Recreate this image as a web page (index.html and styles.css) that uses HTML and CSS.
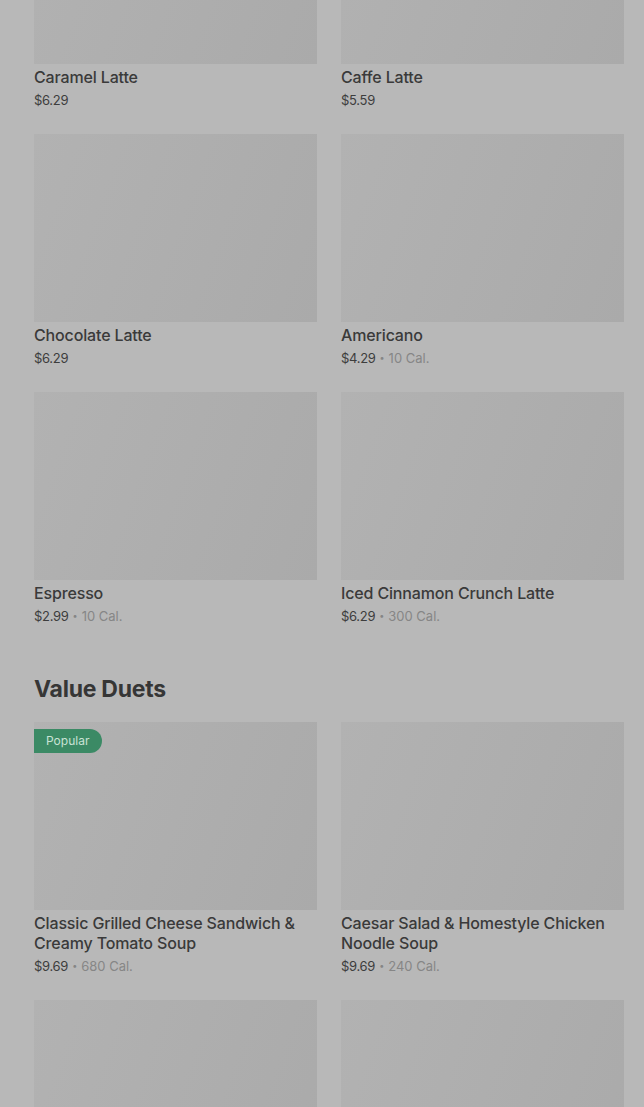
FILE: index.html
```html
<!DOCTYPE html>
<html lang="en">
<head>
<meta charset="utf-8">
<title>Menu</title>
<link rel="stylesheet" href="styles.css">
</head>
<body>
<main class="page">
  <section class="section">
    <div class="grid">
      <div class="card">
        <div class="thumb"></div>
        <div class="title">Caramel Latte</div>
        <div class="meta"><span class="price">$6.29</span></div>
      </div>
      <div class="card">
        <div class="thumb"></div>
        <div class="title">Caffe Latte</div>
        <div class="meta"><span class="price">$5.59</span></div>
      </div>
      <div class="card">
        <div class="thumb"></div>
        <div class="title">Chocolate Latte</div>
        <div class="meta"><span class="price">$6.29</span></div>
      </div>
      <div class="card">
        <div class="thumb"></div>
        <div class="title">Americano</div>
        <div class="meta"><span class="price">$4.29</span><span class="dot">•</span><span class="cal">10 Cal.</span></div>
      </div>
      <div class="card">
        <div class="thumb"></div>
        <div class="title">Espresso</div>
        <div class="meta"><span class="price">$2.99</span><span class="dot">•</span><span class="cal">10 Cal.</span></div>
      </div>
      <div class="card">
        <div class="thumb"></div>
        <div class="title">Iced Cinnamon Crunch Latte</div>
        <div class="meta"><span class="price">$6.29</span><span class="dot">•</span><span class="cal">300 Cal.</span></div>
      </div>
    </div>
  </section>
  <section class="section">
    <h2 class="heading">Value Duets</h2>
    <div class="grid">
      <div class="card">
        <div class="thumb"><span class="badge">Popular</span></div>
        <div class="title">Classic Grilled Cheese Sandwich &amp; Creamy Tomato Soup</div>
        <div class="meta"><span class="price">$9.69</span><span class="dot">•</span><span class="cal">680 Cal.</span></div>
      </div>
      <div class="card">
        <div class="thumb"></div>
        <div class="title">Caesar Salad &amp; Homestyle Chicken Noodle Soup</div>
        <div class="meta"><span class="price">$9.69</span><span class="dot">•</span><span class="cal">240 Cal.</span></div>
      </div>
      <div class="card">
        <div class="thumb"></div>
      </div>
      <div class="card">
        <div class="thumb"></div>
      </div>
    </div>
  </section>
</main>
</body>
</html>
```

FILE: styles.css
```css
html, body {
  margin: 0;
  padding: 0;
  background: #b8b8b8;
  overflow: hidden;
}

body {
  font-family: Inter, "Noto Sans", "Liberation Sans", sans-serif;
  color: #3a3a3a;
}

.page {
  margin-top: -124px;
  padding: 0 20px 0 34px;
}

.section {
  padding-bottom: 49px;
}

.grid {
  display: grid;
  grid-template-columns: 1fr 1fr;
  column-gap: 24px;
  row-gap: 24px;
}

.card {
  display: flex;
  flex-direction: column;
}

.thumb {
  position: relative;
  height: 188px;
  background: linear-gradient(110deg, #b2b2b2 0%, #aeaeae 50%, #aaaaaa 100%);
}

.badge {
  position: absolute;
  left: 0;
  top: 7px;
  height: 24px;
  line-height: 24px;
  padding: 0 13px 0 12px;
  background: #3b8a65;
  color: #c9e2d5;
  font-size: 12px;
  font-weight: 400;
  border-radius: 0 12px 12px 0;
}

.title {
  margin-top: 3px;
  font-size: 16px;
  line-height: 20px;
  font-weight: 500;
  letter-spacing: -0.15px;
  color: #3a3a3a;
}

.meta {
  margin-top: 3px;
  font-size: 13px;
  line-height: 20px;
  display: flex;
  align-items: center;
}

.price {
  color: #3d3d3d;
  letter-spacing: -0.3px;
}

.dot {
  color: #858585;
  font-size: 9px;
  margin: 0 4px;
}

.cal {
  color: #868686;
}

.heading {
  margin: 0 0 19px;
  font-size: 23px;
  line-height: 28px;
  font-weight: 700;
  color: #363636;
  letter-spacing: -0.25px;
}
```
